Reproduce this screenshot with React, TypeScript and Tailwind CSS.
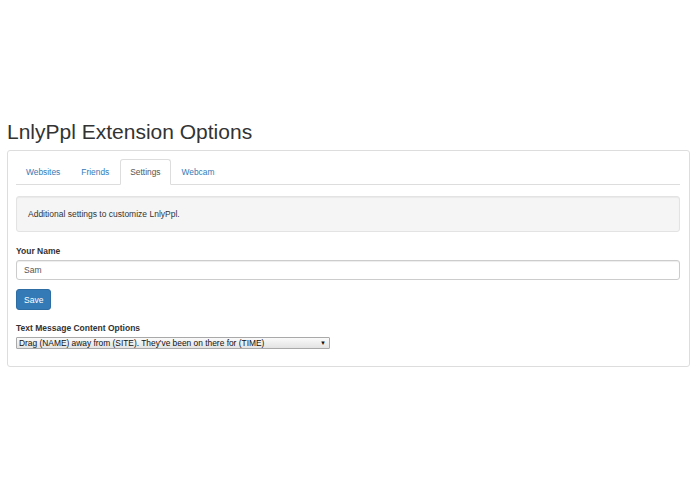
const tabs = ["Websites", "Friends", "Settings", "Webcam"];

export default function App() {
  return (
    <div className="min-h-[494px] bg-white px-[7px] pt-[118px] text-[#333] font-['Liberation_Sans',Arial,sans-serif]">
      <h1 className="text-[21px] leading-[28px] text-[#333]">LnlyPpl Extension Options</h1>
      <div className="mt-[4px] w-[683px] rounded-[3px] border border-[#ddd] pl-[8px] pr-[9px] pt-[8px] pb-[17px]">
        <ul className="flex border-b border-[#ddd]">
          {tabs.map((t) => {
            const active = t === "Settings";
            return (
              <li key={t} className="-mb-px mr-px">
                <span
                  className={
                    active
                      ? "block rounded-t-[3px] border border-[#ddd] border-b-white bg-white px-[9px] py-[7px] text-[8.4px] leading-[10px] text-[#555]"
                      : "block border border-transparent px-[9px] py-[7px] text-[8.4px] leading-[10px] text-[#337ab7]"
                  }
                >
                  {t}
                </span>
              </li>
            );
          })}
        </ul>

        <div className="mt-[11px] rounded-[3px] border border-[#e3e3e3] bg-[#f5f5f5] px-[11px] py-[12px] text-[8.5px] leading-[10px] shadow-[inset_0_1px_1px_rgba(0,0,0,0.05)]">
          Additional settings to customize LnlyPpl.
        </div>

        <label className="mt-[14px] block text-[8.5px] font-bold leading-[10px]">Your Name</label>
        <input
          className="mt-[4px] block h-[20px] w-full rounded-[3px] border border-[#ccc] px-[7px] text-[8.5px] text-[#555] shadow-[inset_0_1px_1px_rgba(0,0,0,0.075)] outline-none"
          defaultValue="Sam"
        />
        <button className="mt-[9px] block h-[21px] rounded-[3px] border border-[#2e6da4] bg-[#337ab7] px-[7px] text-[8.5px] leading-[10px] text-white">
          Save
        </button>

        <label className="mt-[13px] block text-[8.5px] font-bold leading-[10px]">Text Message Content Options</label>
        <div className="mt-[4px] flex h-[12px] w-[314px] items-center justify-between rounded-[1px] border border-[#a9a9a9] bg-gradient-to-b from-[#fafafa] to-[#e3e3e3] pl-[2px] pr-[3px] text-[8.4px] leading-[10px] text-[#111]">
          <span>Drag (NAME) away from (SITE). They've been on there for (TIME)</span>
          <span className="text-[6px] leading-none">▼</span>
        </div>
      </div>
    </div>
  );
}
